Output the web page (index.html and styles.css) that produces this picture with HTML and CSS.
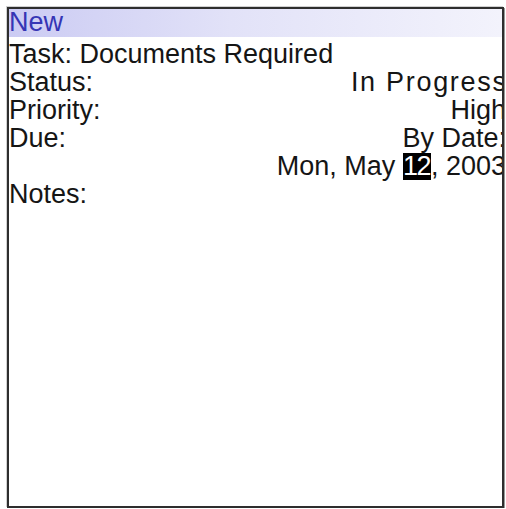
FILE: index.html
```html
<!DOCTYPE html>
<html>
<head>
<meta charset="utf-8">
<link rel="stylesheet" href="styles.css">
</head>
<body>
<div class="frame">
  <div class="title">New</div>
  <div class="body">
    <div class="row"><span>Task: Documents Required</span></div>
    <div class="row"><span>Status:</span><span class="wide">In Progress</span></div>
    <div class="row"><span>Priority:</span><span>High</span></div>
    <div class="row"><span>Due:</span><span>By Date:</span></div>
    <div class="row end"><span>Mon, May <span class="sel">12</span>, 2003</span></div>
    <div class="row"><span>Notes:</span></div>
  </div>
</div>
</body>
</html>
```
FILE: styles.css
```css
html, body {
  margin: 0;
  padding: 0;
  background: #ffffff;
}
body {
  font-family: "Liberation Sans", Arial, sans-serif;
  font-size: 27px;
  color: #151515;
}
.frame {
  margin: 7px 0 0 7px;
  width: 497px;
  height: 501px;
  box-sizing: border-box;
  border: 2px solid #2e2e2e;
  box-shadow: 1px 1px 0 #9a9a9a, -1px -1px 0 #d0d0d0;
  overflow: hidden;
  background: #ffffff;
}
.title {
  height: 28px;
  box-sizing: border-box;
  line-height: 26px;
  padding-bottom: 2px;
  color: #3535b5;
  background: linear-gradient(to right, #cbcbf3 0%, #e2e2f8 45%, #f3f3fc 100%);
}
.body {
  padding-top: 3px;
  margin-right: -4px;
}
.row {
  display: flex;
  justify-content: space-between;
  line-height: 28px;
  height: 28px;
  white-space: nowrap;
}
.row.end {
  justify-content: flex-end;
}
.wide {
  letter-spacing: 1.7px;
  margin-right: -1.7px;
}
.sel {
  display: inline-block;
  background: #000000;
  color: #ffffff;
  line-height: 27px;
  letter-spacing: -1.5px;
  padding-right: 1px;
}
```
